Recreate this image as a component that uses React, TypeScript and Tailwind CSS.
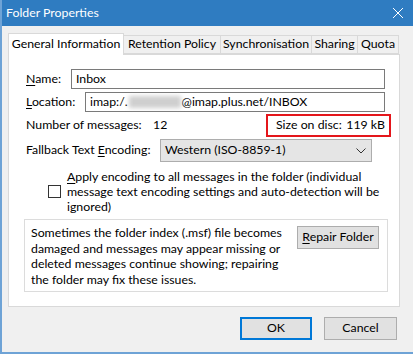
import { ReactNode } from 'react'

const TABS = [
  { label: 'General Information', w: 'w-[116px]', active: true },
  { label: 'Retention Policy', w: 'w-[97px]' },
  { label: 'Synchronisation', w: 'w-[91px]' },
  { label: 'Sharing', w: 'w-[46px]' },
  { label: 'Quota', w: 'w-[41px]' },
]

function Key({ children }: { children: ReactNode }) {
  return <span className="underline underline-offset-2">{children}</span>
}

function WinButton({ children, focused, className = '' }: { children: ReactNode; focused?: boolean; className?: string }) {
  return (
    <div
      className={`flex h-[23px] items-center justify-center bg-[#e1e1e1] ${
        focused ? 'border-2 border-[#0078d7]' : 'border border-[#adadad]'
      } ${className}`}
    >
      {children}
    </div>
  )
}

export default function App() {
  return (
    <div className="flex h-[354px] w-[413px] flex-col overflow-hidden whitespace-nowrap border-b-2 border-l-2 border-[#6ea3d6] bg-[#f0f0f0] font-['Lato',sans-serif] text-[12.3px] leading-none text-black">
      {/* title bar */}
      <div className="flex h-[26px] shrink-0 items-center justify-between bg-[#2f7cc1] pl-[4px] pr-[10px] text-white">
        <span>Folder Properties</span>
        <svg width="10" height="10" viewBox="0 0 10 10" stroke="white" strokeWidth="1">
          <path d="M0 0L10 10M10 0L0 10" />
        </svg>
      </div>

      <div className="flex flex-col pl-[6px] pt-[7px]">
        {/* tabs */}
        <div className="flex h-[21px] items-end">
          {TABS.map((t) =>
            t.active ? (
              <div
                key={t.label}
                className={`relative z-10 -mb-px flex h-[22px] ${t.w} items-center justify-center border border-b-0 border-[#d9d9d9] bg-white`}
              >
                {t.label}
              </div>
            ) : (
              <div
                key={t.label}
                className={`flex h-[19px] ${t.w} items-center justify-center border border-l-0 border-[#d9d9d9] bg-[#f0f0f0]`}
              >
                {t.label}
              </div>
            ),
          )}
        </div>

        {/* panel */}
        <div className="flex h-[253px] w-[392px] flex-col border border-[#d9d9d9] bg-white pl-[17px] pr-[14px] pt-[14px]">
          <div className="flex h-[20px] items-center">
            <span className="w-[45px]">
              <Key>N</Key>ame:
            </span>
            <div className="flex h-[20px] flex-1 items-center border border-[#7a7a7a] px-[4px]">Inbox</div>
          </div>

          <div className="mt-[3px] flex h-[20px] items-center">
            <span className="w-[59px]">
              <Key>L</Key>ocation:
            </span>
            <div className="flex h-[20px] flex-1 items-center border border-[#7a7a7a] px-[4px]">
              imap:/.
              <span className="mx-px inline-block h-[12px] w-[52px] bg-[#cfcfcf] blur-[2px]" />
              @imap.plus.net/INBOX
            </div>
          </div>

          <div className="mt-[2px] flex h-[23px] items-center">
            <span className="w-[127px]">Number of messages:</span>
            <span>12</span>
            <div className="ml-auto mr-[-6px] flex h-[23px] w-[125px] items-center justify-between border-2 border-[#e4161b] pl-[8px] pr-[4px]">
              <span>Size on disc:</span>
              <span>119 kB</span>
            </div>
          </div>

          <div className="mt-[2px] flex h-[23px] items-center">
            <span className="w-[134px]">
              Fallback Text <Key>E</Key>ncoding:
            </span>
            <div className="flex h-[23px] w-[212px] items-center justify-between border border-[#adadad] bg-[#e5e5e5] pl-[4px] pr-[5px]">
              <span>Western (ISO-8859-1)</span>
              <svg width="10" height="6" viewBox="0 0 10 6" fill="none" stroke="#333" strokeWidth="1">
                <path d="M0.5 0.5L5 5L9.5 0.5" />
              </svg>
            </div>
          </div>

          <div className="mt-[7px] flex items-center pl-[22px]">
            <div className="h-[13px] w-[13px] shrink-0 border border-[#333]" />
            <div className="ml-[6px] leading-[15px]">
              <Key>A</Key>pply encoding to all messages in the folder (individual
              <br />
              message text encoding settings and auto-detection will be
              <br />
              ignored)
            </div>
          </div>

          <div className="ml-[-2px] mt-[5px] flex h-[73px] w-[364px] items-start border border-[#dcdcdc] pl-[6px] pr-[8px] pt-[5px]">
            <div className="flex-1 leading-[15.5px]">
              Sometimes the folder index (.msf) file becomes
              <br />
              damaged and messages may appear missing or
              <br />
              deleted messages continue showing; repairing
              <br />
              the folder may fix these issues.
            </div>
            <WinButton className="mt-px w-[82px]">
              <span>
                <Key>R</Key>epair Folder
              </span>
            </WinButton>
          </div>
        </div>

        {/* buttons */}
        <div className="mt-[10px] flex justify-end gap-[12px] pr-[16px]">
          <WinButton focused className="w-[72px]">
            OK
          </WinButton>
          <WinButton className="w-[73px]">Cancel</WinButton>
        </div>
      </div>
    </div>
  )
}
